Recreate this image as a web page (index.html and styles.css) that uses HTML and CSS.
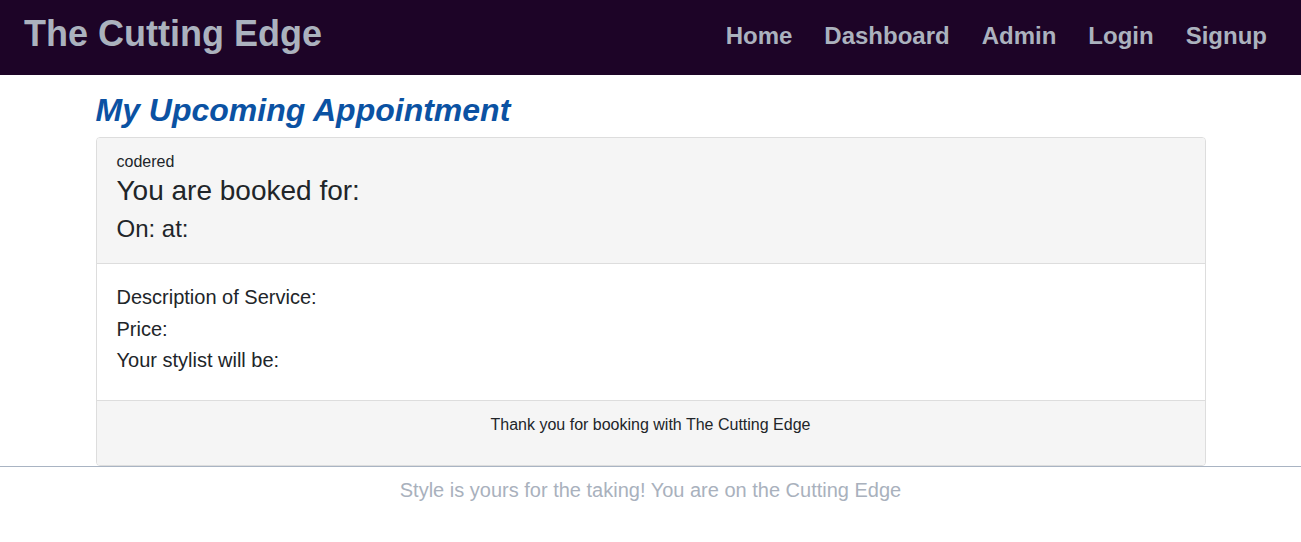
FILE: index.html
```html
<!DOCTYPE html>
<html lang="en">
<head>
<meta charset="utf-8">
<title>The Cutting Edge</title>
<link rel="stylesheet" href="styles.css">
</head>
<body>
<nav class="navbar">
  <a class="brand" href="#">The Cutting Edge</a>
  <ul class="nav-links">
    <li><a href="#">Home</a></li>
    <li><a href="#">Dashboard</a></li>
    <li><a href="#">Admin</a></li>
    <li><a href="#">Login</a></li>
    <li><a href="#">Signup</a></li>
  </ul>
</nav>
<main class="container">
  <h2 class="page-title">My Upcoming Appointment</h2>
  <div class="panel">
    <div class="panel-heading">
      <div class="user">codered</div>
      <h3 class="booked">You are booked for:</h3>
      <h4 class="when">On: at:</h4>
    </div>
    <div class="panel-body">
      <p>Description of Service:</p>
      <p>Price:</p>
      <p>Your stylist will be:</p>
    </div>
    <div class="panel-footer">Thank you for booking with The Cutting Edge</div>
  </div>
</main>
<footer class="site-footer">
  <p>Style is yours for the taking! You are on the Cutting Edge</p>
</footer>
</body>
</html>
```
FILE: styles.css
```css
* { box-sizing: border-box; }
html, body {
  margin: 0;
  padding: 0;
  font-family: "Liberation Sans", Arial, sans-serif;
  color: #212529;
  background: #fff;
}
.navbar {
  height: 75px;
  background: #1d0427;
  display: flex;
  align-items: center;
  justify-content: space-between;
  padding: 0 18px 0 24px;
}
.brand {
  color: #abb2be;
  font-size: 36px;
  font-weight: bold;
  text-decoration: none;
  line-height: 1;
  margin-top: -7px;
}
.nav-links {
  list-style: none;
  display: flex;
  margin: 0;
  padding: 0;
  margin-top: -4px;
}
.nav-links a {
  display: block;
  padding: 0 16px;
  color: #abb2be;
  font-size: 24px;
  font-weight: bold;
  text-decoration: none;
}
.container {
  width: 1110px;
  margin: 0 auto;
}
.page-title {
  margin: 0;
  padding-top: 17px;
  height: 62px;
  font-size: 32px;
  font-style: italic;
  font-weight: bold;
  color: #0b52a3;
  line-height: 36px;
}
.panel {
  border: 1px solid #dddddd;
  border-radius: 4px;
  overflow: hidden;
}
.panel-heading {
  background: #f5f5f5;
  border-bottom: 1px solid #dddddd;
  padding: 15px 20px 0;
  height: 126px;
}
.user {
  font-size: 16px;
  line-height: 18px;
}
.booked {
  margin: 5px 0 0;
  font-size: 28px;
  font-weight: normal;
  line-height: 30px;
}
.when {
  margin: 9px 0 0;
  font-size: 24px;
  font-weight: normal;
  line-height: 28px;
}
.panel-body {
  padding: 18px 20px 0;
  height: 136px;
}
.panel-body p {
  margin: 0;
  font-size: 20px;
  line-height: 31.5px;
}
.panel-footer {
  background: #f5f5f5;
  border-top: 1px solid #dddddd;
  height: 65px;
  text-align: center;
  font-size: 16px;
  padding-top: 15px;
}
.site-footer {
  border-top: 1px solid #a9b4c3;
  text-align: center;
}
.site-footer p {
  margin: 0;
  padding-top: 12px;
  font-size: 20px;
  color: #a9b1bd;
}
```
